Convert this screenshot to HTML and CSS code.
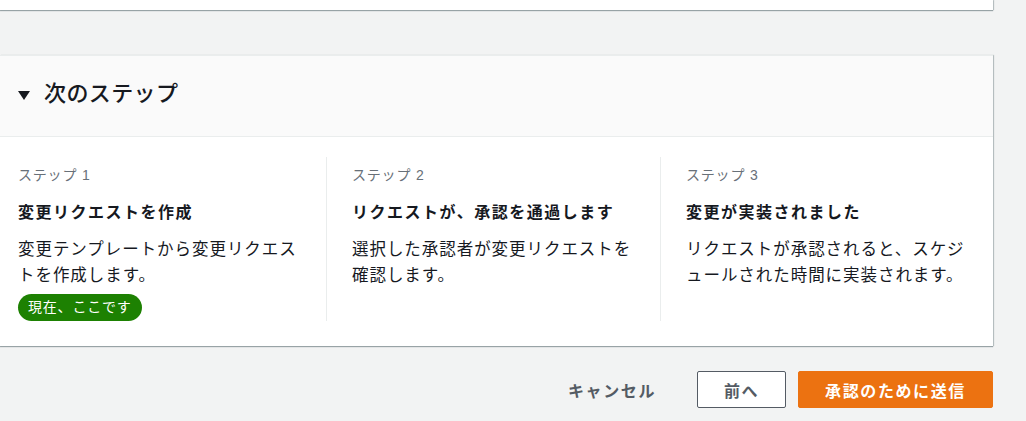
FILE: index.html
```html
<!DOCTYPE html>
<html lang="ja">
<head>
<meta charset="utf-8">
<link rel="stylesheet" href="styles.css">
</head>
<body>
<div class="page">
  <div class="prev-card"></div>
  <section class="card">
    <header class="card-header">
      <span class="caret"></span>
      <h2 class="card-title">次のステップ</h2>
    </header>
    <div class="steps">
      <div class="step">
        <div class="step-label">ステップ 1</div>
        <div class="step-title">変更リクエストを作成</div>
        <p class="step-desc">変更テンプレートから変更リクエス<br>トを作成します。</p>
        <span class="badge">現在、ここです</span>
      </div>
      <div class="step">
        <div class="step-label">ステップ 2</div>
        <div class="step-title">リクエストが、承認を通過します</div>
        <p class="step-desc">選択した承認者が変更リクエストを<br>確認します。</p>
      </div>
      <div class="step">
        <div class="step-label">ステップ 3</div>
        <div class="step-title">変更が実装されました</div>
        <p class="step-desc">リクエストが承認されると、スケジ<br>ュールされた時間に実装されます。</p>
      </div>
    </div>
  </section>
  <div class="actions">
    <button class="btn btn-link">キャンセル</button>
    <button class="btn btn-normal">前へ</button>
    <button class="btn btn-primary">承認のために送信</button>
  </div>
</div>
</body>
</html>
```

FILE: styles.css
```css
html, body {
  margin: 0;
  padding: 0;
  background: #f2f3f3;
  font-family: "Liberation Sans", "Noto Sans CJK JP", sans-serif;
  color: #16191f;
}

.page {
  width: 993px;
}

.prev-card {
  height: 10px;
  background: #fff;
  box-shadow: 0 1px 1px 0 rgba(0, 28, 36, 0.35), 1px 0 1px 0 rgba(0, 28, 36, 0.2);
}

.card {
  margin-top: 45px;
  background: #fff;
  border-top: 1px solid #eaeded;
  box-shadow: 0 1px 1px 0 rgba(0, 28, 36, 0.35), 1px 0 1px 0 rgba(0, 28, 36, 0.2);
}

.card-header {
  background: #fafafa;
  border-bottom: 1px solid #eaeded;
  display: flex;
  align-items: center;
  padding: 0 0 4px 18px;
  box-sizing: border-box;
  height: 81px;
}

.caret {
  width: 0;
  height: 0;
  border-left: 6px solid transparent;
  border-right: 6px solid transparent;
  border-top: 9px solid #16191f;
  margin-right: 14px;
  margin-top: 2px;
}

.card-title {
  margin: 0;
  font-size: 22px;
  font-weight: 500;
  letter-spacing: 0.4px;
  line-height: 30px;
  color: #16191f;
}

.steps {
  display: grid;
  grid-template-columns: 308px 334px 1fr;
  padding: 20px 0 25px 18px;
}

.step {
  min-height: 163px;
  box-sizing: border-box;
}

.step + .step {
  border-left: 1px solid #eaeded;
  padding-left: 25px;
}

.step-label {
  font-size: 14px;
  line-height: 20px;
  color: #687078;
  margin-top: 8px;
  letter-spacing: 0.8px;
}

.step-title {
  font-size: 16px;
  font-weight: 700;
  letter-spacing: 1.5px;
  line-height: 22px;
  margin-top: 17px;
}

.step-desc {
  margin: 12px 0 0;
  font-size: 16.5px;
  line-height: 26px;
  white-space: nowrap;
  letter-spacing: 0.95px;
}

.badge {
  display: inline-block;
  margin-top: 6px;
  background: #1d8102;
  color: #fff;
  font-size: 14px;
  line-height: 27px;
  height: 27px;
  padding: 0 10px;
  border-radius: 14px;
  letter-spacing: 0.8px;
}

.actions {
  display: flex;
  justify-content: flex-end;
  align-items: center;
  margin-top: 25px;
  gap: 12px;
}

.btn {
  font-family: inherit;
  font-size: 16px;
  font-weight: 700;
  letter-spacing: 1.6px;
  height: 37px;
  border-radius: 2px;
  cursor: pointer;
  box-sizing: border-box;
  padding: 0 20px;
}

.btn-link {
  background: transparent;
  border: 1px solid transparent;
  color: #545b64;
  margin-right: 8px;
}

.btn-normal {
  background: #fff;
  border: 1px solid #545b64;
  color: #545b64;
  width: 89px;
  padding: 0;
}

.btn-primary {
  background: #ec7211;
  border: 1px solid #ec7211;
  color: #fff;
  width: 195px;
  padding: 0;
}
```
